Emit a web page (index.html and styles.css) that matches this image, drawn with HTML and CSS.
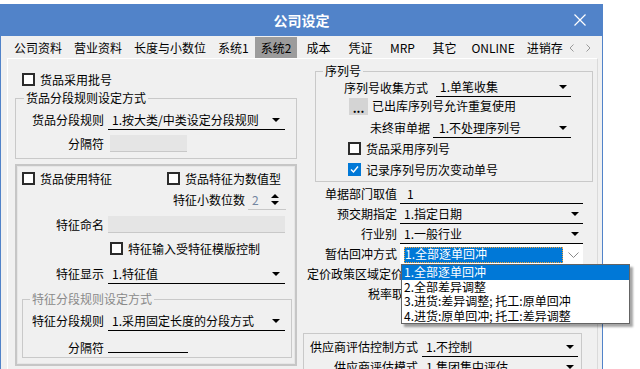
FILE: index.html
```html
<!DOCTYPE html>
<html lang="zh-CN">
<head>
<meta charset="UTF-8">
<meta name="viewport" content="width=device-width, initial-scale=1.0">
<title>公司设定</title>
<link rel="stylesheet" href="styles.css">
</head>
<body>

<div class="window">
  <div class="titlebar">
    <span></span>
    <span class="title">公司设定</span>
    <span class="close">
      <svg width="12" height="12" viewBox="0 0 12 12"><path d="M0.5 0.5L11.5 11.5M11.5 0.5L0.5 11.5" stroke="#fff" stroke-width="1.2" fill="none"/></svg>
    </span>
  </div>

  <div class="tabs">
    <div class="tab-list">
      <span class="tab">公司资料</span>
      <span class="tab">营业资料</span>
      <span class="tab">长度与小数位</span>
      <span class="tab">系统1</span>
      <span class="tab active">系统2</span>
      <span class="tab">成本</span>
      <span class="tab">凭证</span>
      <span class="tab">MRP</span>
      <span class="tab">其它</span>
      <span class="tab">ONLINE</span>
      <span class="tab">进销存</span>
    </div>
    <div class="tab-arrows">
      <svg width="5" height="8" viewBox="0 0 5 8"><path d="M4.5 0.5L1 4L4.5 7.5" stroke="#9a9a9a" fill="none"/></svg>
      <svg width="5" height="8" viewBox="0 0 5 8"><path d="M0.5 0.5L4 4L0.5 7.5" stroke="#9a9a9a" fill="none"/></svg>
    </div>
  </div>

  <div class="page">
    <!-- left column -->
    <div class="col-left">
      <label class="chk-row batch"><span class="chk"></span>货品采用批号</label>

      <fieldset class="group g1">
        <legend>货品分段规则设定方式</legend>
        <div class="frow"><span class="lbl">货品分段规则</span><span class="combo w177">1.按大类/中类设定分段规则</span></div>
        <div class="frow sep-row"><span class="lbl">分隔符</span><span class="inp short"></span></div>
      </fieldset>

      <div class="frame">
        <div class="chk-pair">
          <label class="chk-row w145"><span class="chk"></span>货品使用特征</label>
          <label class="chk-row"><span class="chk"></span>货品特征为数值型</label>
        </div>
        <div class="frow digits">
          <span class="lbl-auto">特征小数位数</span>
          <span class="spin"><span class="spin-val">2</span><span class="spin-arr"><i class="up"></i><i class="down"></i></span></span>
        </div>
        <div class="frow name-row"><span class="lbl">特征命名</span><span class="inp wide"></span></div>
        <label class="chk-row tmpl"><span class="chk"></span>特征输入受特征模版控制</label>
        <div class="frow show-row"><span class="lbl">特征显示</span><span class="combo w177">1.特征值</span></div>

        <fieldset class="group g2">
          <legend>特征分段规则设定方式</legend>
          <div class="frow"><span class="lbl">特征分段规则</span><span class="combo w177">1.采用固定长度的分段方式</span></div>
          <div class="frow sep2"><span class="lbl">分隔符</span><span class="uline"></span></div>
        </fieldset>
      </div>
    </div>

    <!-- right column -->
    <div class="col-right">
      <fieldset class="group serial">
        <legend>序列号</legend>
        <div class="frow s1"><span class="lbl">序列号收集方式</span><span class="combo">1.单笔收集</span></div>
        <div class="frow s2"><span class="dots">...</span><span class="dots-txt">已出库序列号允许重复使用</span></div>
        <div class="frow s3"><span class="lbl">未终审单据</span><span class="combo">1.不处理序列号</span></div>
        <label class="chk-row s4"><span class="chk"></span>货品采用序列号</label>
        <label class="chk-row s5"><span class="chk on"><svg width="9" height="9" viewBox="0 0 9 9"><path d="M1 4.5L3.5 7L8 1.5" stroke="#fff" stroke-width="1.4" fill="none"/></svg></span>记录序列号历次变动单号</label>
      </fieldset>

      <div class="mid">
        <div class="frow"><span class="lbl">单据部门取值</span><span class="combo plain">1</span></div>
        <div class="frow"><span class="lbl">预交期指定</span><span class="combo">1.指定日期</span></div>
        <div class="frow"><span class="lbl">行业别</span><span class="combo">1.一般行业</span></div>
        <div class="frow"><span class="lbl">暂估回冲方式</span>
          <span class="combo-open">
            <span class="sel">1.全部逐单回冲</span>
            <span class="dd-btn"><svg width="11" height="6" viewBox="0 0 11 6"><path d="M0.5 0.5L5.5 5.5L10.5 0.5" stroke="#8a8a8a" fill="none"/></svg></span>
            <span class="dd-list">
              <span class="dd-item hl">1.全部逐单回冲</span>
              <span class="dd-item">2.全部差异调整</span>
              <span class="dd-item">3.进货:差异调整; 托工:原单回冲</span>
              <span class="dd-item">4.进货:原单回冲; 托工:差异调整</span>
            </span>
          </span>
        </div>
        <div class="frow price"><span class="lbl-auto">定价政策区域定价方式</span><span class="combo">1.不控制</span></div>
        <div class="frow tax"><span class="lbl-auto">税率取值方式</span><span class="combo">1.货品</span></div>
      </div>

      <div class="supplier">
        <div class="frow"><span class="lbl">供应商评估控制方式</span><span class="combo">1.不控制</span></div>
        <div class="frow"><span class="lbl">供应商评估模式</span><span class="combo">1.集团集中评估</span></div>
      </div>
    </div>
  </div>
</div>

</body>
</html>
```

FILE: styles.css
```css
html, body {
  margin: 0;
  overflow: hidden;
}
body {
  background-color: #fff;
  font-family: "Noto Sans CJK SC", sans-serif;
  font-size: 12px;
  line-height: 14px;
  color: #000;
}
.window {
  width: 601px;
  height: 370px;
  margin-top: 4px;
  border-left: 1px solid #5183c9;
  border-right: 1px solid #5183c9;
  background-color: #f0f0f0;
}
.titlebar {
  height: 32px;
  background-color: #5183c9;
  display: grid;
  grid-template-columns: 1fr auto 1fr;
  align-items: center;
  color: #fff;
}
.title {
  font-size: 14px;
  font-weight: bold;
}
.close {
  justify-self: end;
  margin-right: 16px;
  height: 12px;
}

/* tabs */
.tabs {
  height: 22px;
  display: flex;
  align-items: flex-end;
  padding-left: 7px;
}
.tab-list {
  width: 559px;
  display: flex;
  overflow: hidden;
}
.tab {
  flex: none;
  min-width: 42px;
  box-sizing: border-box;
  padding: 0 6px;
  height: 21px;
  line-height: 21px;
  text-align: center;
  white-space: nowrap;
}
.tab.active {
  background-color: #9c9c9c;
}
.tab-arrows {
  display: flex;
  gap: 12px;
  padding-left: 2px;
  height: 21px;
  align-items: center;
}

/* page */
.page {
  margin-left: 6px;
  width: 589px;
  height: 320px;
  border-top: 1px solid #fff;
  border-left: 1px solid #fff;
  border-right: 1px solid #dadada;
  display: flex;
}
.col-left {
  margin-left: 7px;
  width: 282px;
  flex: none;
}
.col-right {
  margin-left: 6px;
  width: 290px;
  flex: none;
}

/* common controls */
.frow {
  display: flex;
  align-items: center;
  height: 20px;
}
.lbl, .lbl-auto {
  flex: none;
  text-align: right;
  white-space: nowrap;
}
.chk-row {
  display: flex;
  align-items: center;
  gap: 5px;
  height: 15px;
  white-space: nowrap;
}
.chk {
  flex: none;
  width: 13px;
  height: 13px;
  box-sizing: border-box;
  border: 2px solid #2b2b2b;
  background-color: #fff;
  display: flex;
  align-items: center;
  justify-content: center;
}
.chk.on {
  border: none;
  background-color: #0078d7;
}
.combo {
  flex: none;
  height: 100%;
  box-sizing: border-box;
  border-bottom: 1px solid #000;
  display: flex;
  align-items: center;
  padding-left: 4px;
  white-space: nowrap;
}
.combo::after {
  content: "";
  margin-left: auto;
  margin-right: 5px;
  border-left: 4px solid transparent;
  border-right: 4px solid transparent;
  border-top: 4px solid #000;
}
.combo.plain::after {
  display: none;
}
.w177 {
  width: 177px;
}
.inp {
  flex: none;
  height: 17px;
  box-sizing: border-box;
  background-color: #e5e5e5;
  border-bottom: 1px solid #c8c8c8;
}
.inp.short {
  width: 77px;
  margin-left: 2px;
}
.inp.wide {
  width: 177px;
}
.uline {
  flex: none;
  align-self: flex-start;
  width: 80px;
  height: 12px;
  box-sizing: border-box;
  border-bottom: 1px solid #000;
}

/* group boxes */
.group {
  margin: 0;
  min-width: 0;
  box-sizing: border-box;
  border: 1px solid #c9c9c9;
}
.group legend {
  padding: 0 2px;
  line-height: 14px;
}

/* left column */
.batch {
  margin-top: 13px;
  padding-left: 7px;
}
.g1 {
  margin-top: 4px;
  padding: 5px 0;
}
.g1 legend {
  margin-left: 8px;
}
.g1 .lbl {
  width: 88px;
  margin-right: 4px;
}
.sep-row {
  margin-top: 4px;
  height: 19px;
}
.frame {
  margin-top: 5px;
  height: 202px;
  box-sizing: border-box;
  border: 2px solid #c6c6c6;
  box-shadow: inset 0 0 0 1px #e6e6e6;
}
.frame .lbl {
  width: 87px;
  margin-right: 4px;
}
.chk-pair {
  display: flex;
  margin-top: 5px;
  padding-left: 5px;
}
.w145 {
  width: 145px;
}
.digits {
  margin-top: 4px;
  justify-content: flex-end;
  padding-right: 9px;
}
.digits .lbl-auto {
  margin-right: 3px;
}
.spin {
  width: 38px;
  height: 100%;
  box-sizing: border-box;
  border-bottom: 1px solid #c8c8c8;
  display: flex;
  align-items: center;
}
.spin-val {
  padding-left: 4px;
  color: #7386a0;
}
.spin-arr {
  margin-left: auto;
  margin-right: 7px;
  display: flex;
  flex-direction: column;
  gap: 3px;
}
.spin-arr i {
  display: block;
  border-left: 4px solid transparent;
  border-right: 4px solid transparent;
}
.spin-arr .up {
  border-bottom: 4px solid #000;
}
.spin-arr .down {
  border-top: 4px solid #000;
}
.name-row {
  margin-top: 5px;
  height: 19px;
}
.tmpl {
  margin-top: 7px;
  padding-left: 93px;
}
.show-row {
  margin-top: 8px;
}
.g2 {
  margin: 8px 0 0 5px;
  width: 270px;
  padding: 5px 0 2px;
}
.g2 legend {
  margin-left: 7px;
  color: #8a8a8a;
}
.g2 .lbl {
  width: 81px;
  margin-right: 4px;
}
.g2 .combo {
  width: 177px;
}
.sep2 {
  margin-top: 10px;
  height: 14px;
}

/* right column */
.serial {
  margin: 5px 0 0 12px;
  width: 278px;
  padding: 0 0 4px;
}
.serial legend {
  margin-left: 7px;
}
.s1 {
  height: 19px;
}
.s1 .lbl {
  width: 112px;
  margin-right: 8px;
}
.s1 .combo {
  width: 135px;
}
.s1 .combo::after, .s3 .combo::after {
  margin-right: 4px;
}
.s2 {
  height: 18px;
  padding-left: 33px;
}
.dots {
  width: 19px;
  height: 17px;
  background-color: #d4d4d4;
  text-align: center;
  line-height: 19px;
  font-weight: bold;
}
.dots-txt {
  margin-left: 4px;
}
.s3 {
  margin-top: 3px;
}
.s3 .lbl {
  width: 114px;
  margin-right: 3px;
}
.s3 .combo {
  width: 138px;
  padding-left: 6px;
}
.s4 {
  margin-top: 3px;
  padding-left: 32px;
}
.s5 {
  margin-top: 6px;
  padding-left: 32px;
}
.mid {
  margin-top: 2px;
}
.mid .lbl {
  width: 94px;
  margin-right: 3px;
}
.mid .combo {
  width: 183px;
}
.mid .combo.plain {
  padding-left: 7px;
}
.mid .combo::after {
  margin-right: 4px;
}
.combo-open {
  position: relative;
  width: 183px;
  height: 100%;
  box-sizing: border-box;
  padding: 3px 0 1px;
  display: flex;
  background-color: #fff;
}
.sel {
  flex: 1;
  margin-left: 4px;
  padding-left: 1px;
  background-color: #0078d7;
  color: #fff;
  outline: 1px dotted #f3a33a;
  outline-offset: -1px;
  line-height: 14px;
}
.dd-btn {
  width: 20px;
  display: flex;
  align-items: center;
  justify-content: center;
}
.dd-list {
  position: absolute;
  top: 100%;
  left: 1px;
  width: 227px;
  border: 1px solid #646464;
  background-color: #fff;
  box-shadow: 3px 3px 2px rgba(0, 0, 0, 0.35);
  z-index: 10;
}
.dd-item {
  display: block;
  padding-left: 2px;
  line-height: 14.5px;
  white-space: nowrap;
}
.dd-item.hl {
  background-color: #0078d7;
  color: #fff;
}
.price {
  padding-left: 4px;
}
.price .lbl-auto {
  margin-right: 4px;
}
.price .combo, .tax .combo {
  width: 150px;
}
.tax {
  padding-left: 65px;
}
.tax .lbl-auto {
  margin-right: 4px;
}
.supplier {
  margin-top: 29px;
  width: 279px;
  box-sizing: border-box;
  border: 1px solid #c9c9c9;
  padding-top: 3px;
}
.supplier .lbl {
  width: 114px;
  margin-right: 4px;
}
.supplier .combo {
  width: 156px;
}
.supplier .combo::after {
  margin-right: 4px;
}
```
